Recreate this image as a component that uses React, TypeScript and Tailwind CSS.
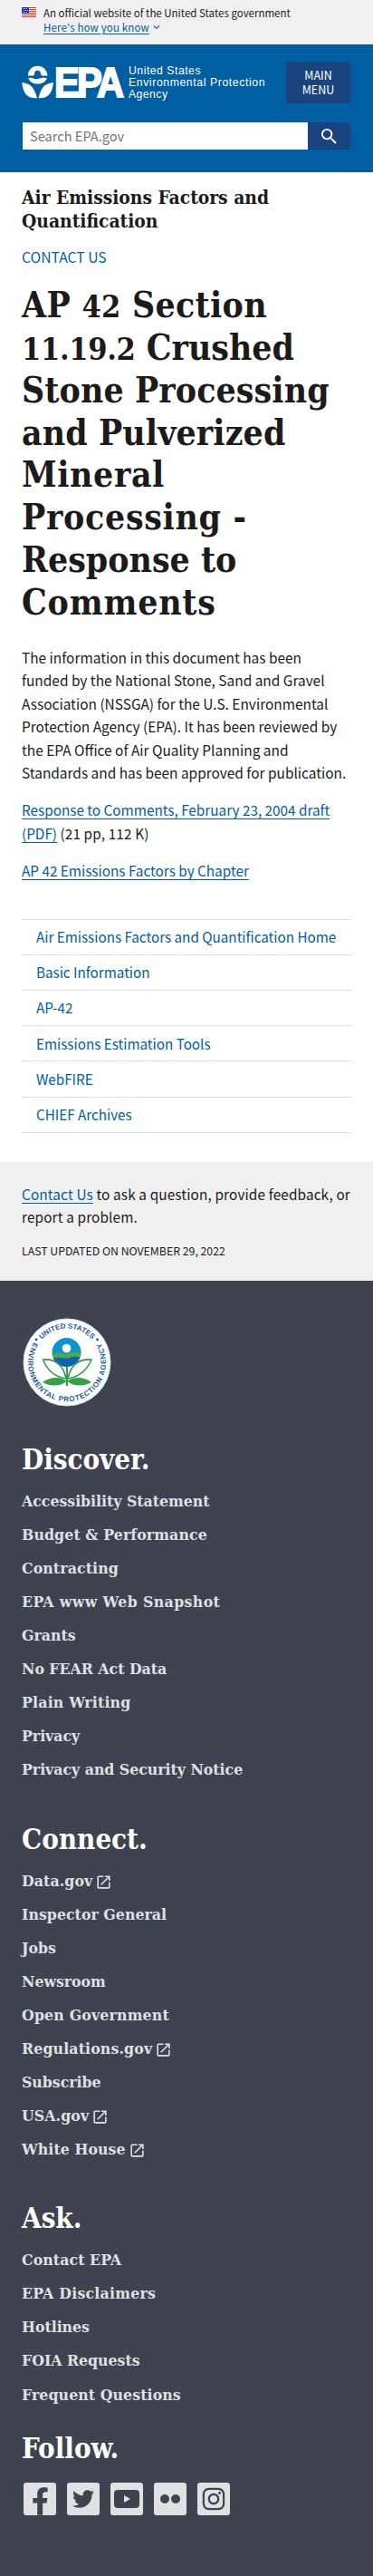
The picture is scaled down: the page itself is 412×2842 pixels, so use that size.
import type { ReactNode } from "react";
import { FaFacebookF, FaInstagram, FaTwitter } from "react-icons/fa";
import { MdExpandMore, MdOpenInNew, MdSearch } from "react-icons/md";

const SERIF = "font-['DejaVu_Serif_Condensed','DejaVu_Serif',serif] font-bold";
const LINK = "text-[#005ea2] underline underline-offset-[3px] decoration-1";

function Flag() {
  return (
    <svg width="16" height="11" viewBox="0 0 16 11" className="block shrink-0">
      <rect width="16" height="11" fill="#fff" />
      {[0, 2, 4, 6, 8, 10].map((y) => (
        <rect key={y} y={y} width="16" height="1" fill="#db3e1f" />
      ))}
      <rect width="8" height="7" fill="#1e33b1" />
      {[1, 3, 5].map((y) =>
        [1, 3, 5].map((x) => <rect key={`${x}-${y}`} x={x + (y === 3 ? 1 : 0)} y={y} width="1" height="1" fill="#fff" opacity=".8" />)
      )}
    </svg>
  );
}

function Logo() {
  return (
    <svg width="270" height="44" viewBox="0 0 270 44" className="block overflow-visible" fill="#fff" role="img">
      <path d="M6.8 13.6C7.2 7 11.600 2.800 17.500 2.800S28 7 28.500 13.600H22A4.700 4.700 0 0 0 13 13.600Z" />
      <circle cx="17.500" cy="11" r="3.300" fill="#005ea2" />
      <path d="M7.200 16.200C12 14.700 13 18 17.500 17C21 16 24 15 28 16.200C26 20.500 22.500 22.600 17.600 22.600S9 20.500 7.200 16.200Z" />
      <path d="M.2 21C8 22 13.500 24.500 17 38.300C6 39 1.500 33 .2 21Z" />
      <path d="M35 21C27 22 21.500 24.500 18.500 38.300C29 39 33.700 33 35 21Z" />
      <text transform="translate(36 36.600) scale(.895 1)" letterSpacing="-3" fontSize="46.500" stroke="#fff" strokeWidth="2" className="font-['Liberation_Sans',Arial,sans-serif] font-bold">
        EPA
      </text>
      <g fontSize="12.200" className="font-['Liberation_Sans',Arial,sans-serif] font-normal">
        <text x="118" y="12.400" textLength="79.500">United States</text>
        <text x="118" y="25" textLength="150.500">Environmental Protection</text>
        <text x="118" y="38" textLength="43">Agency</text>
      </g>
    </svg>
  );
}

function Seal() {
  return (
    <svg width="98" height="98" viewBox="0 0 98 98" className="ml-px block" role="img">
      <defs>
        <path id="seal-top" d="M11.500 49a37.500 37.500 0 0 1 75 0" />
        <path id="seal-bottom" d="M12.400 26.700A43 43 0 1 0 85.600 26.700" />
        <clipPath id="seal-globe">
          <circle cx="48.500" cy="38" r="16" />
        </clipPath>
      </defs>
      <circle cx="49" cy="49" r="48" fill="#fff" stroke="#bfe3fa" strokeWidth="1" />
      <g fill="#1c5c97" fontSize="8" className="font-['Liberation_Sans',Arial,sans-serif] font-bold">
        <text textAnchor="middle">
          <textPath href="#seal-top" startOffset="50%">UNITED STATES</textPath>
        </text>
        <text textAnchor="middle" letterSpacing=".7">
          <textPath href="#seal-bottom" startOffset="50%">ENVIRONMENTAL PROTECTION AGENCY</textPath>
        </text>
      </g>
      <circle cx="15" cy="24" r="1.400" fill="#1c5c97" />
      <circle cx="82.500" cy="24" r="1.400" fill="#1c5c97" />
      <g clipPath="url(#seal-globe)">
        <rect x="32" y="22" width="33" height="19" fill="#0e93d2" />
        <path d="M32 40C39 36 43 41 50 39S59 37 65 39V46H32Z" fill="#4aa948" />
        <path d="M32 44.500C40 42 46 46 52 44S60 43 65 44V56H32Z" fill="#0b62b0" />
      </g>
      <circle cx="48.500" cy="33.500" r="4.800" fill="#fff" />
      <path d="M49 54V75" stroke="#34a047" strokeWidth="2" />
      <path d="M22.500 46C36 45 45 52 48 67C36 65 27 58 22.500 46ZM76 46C62 45 53 52 50 67C62 65 71 58 76 46Z" fill="#fff" stroke="#34a047" strokeWidth="1.600" />
      <path d="M22 71C30 65 42 64 49 70C56 64 68 65 76 71C67 76 56 76 49 69.500C42 76 31 76 22 71Z" fill="#34a047" />
    </svg>
  );
}

const navLinks = ["Air Emissions Factors and Quantification Home", "Basic Information", "AP-42", "Emissions Estimation Tools", "WebFIRE", "CHIEF Archives"];

const headingLines: [ReactNode, string][] = [
  [<>AP <span className="text-[34px]">42</span> Section</>, "tracking-[0.3px]"],
  [<><span className="text-[34px] tracking-[-0.3px]">11.19.2</span> Crushed</>, ""],
  ["Stone Processing", "tracking-[0.1px]"],
  ["and Pulverized", "tracking-[0.1px]"],
  ["Mineral", "tracking-[0.6px]"],
  ["Processing -", "tracking-[0.7px]"],
  ["Response to", ""],
  ["Comments", "tracking-[0.8px]"],
];

type FooterLink = { label: string; external?: boolean; tracking?: string };
const footerGroups: { title: string; links: FooterLink[] }[] = [
  {
    title: "Discover.",
    links: [
      { label: "Accessibility Statement" },
      { label: "Budget & Performance", tracking: "tracking-[0.12px]" },
      { label: "Contracting", tracking: "tracking-[0.12px]" },
      { label: "EPA www Web Snapshot", tracking: "tracking-[0.4px]" },
      { label: "Grants" },
      { label: "No FEAR Act Data" },
      { label: "Plain Writing", tracking: "tracking-[0.2px]" },
      { label: "Privacy" },
      { label: "Privacy and Security Notice" },
    ],
  },
  {
    title: "Connect.",
    links: [
      { label: "Data.gov", external: true, tracking: "tracking-[0.1px]" },
      { label: "Inspector General", tracking: "tracking-[0.05px]" },
      { label: "Jobs" },
      { label: "Newsroom" },
      { label: "Open Government", tracking: "tracking-[0.2px]" },
      { label: "Regulations.gov", external: true, tracking: "tracking-[0.15px]" },
      { label: "Subscribe" },
      { label: "USA.gov", external: true, tracking: "tracking-[0.1px]" },
      { label: "White House", external: true, tracking: "tracking-[0.1px]" },
    ],
  },
  {
    title: "Ask.",
    links: [
      { label: "Contact EPA", tracking: "tracking-[0.1px]" },
      { label: "EPA Disclaimers", tracking: "tracking-[0.25px]" },
      { label: "Hotlines" },
      { label: "FOIA Requests" },
      { label: "Frequent Questions", tracking: "tracking-[0.1px]" },
    ],
  },
];

function FooterTitle({ children }: { children: ReactNode }) {
  return <h2 className={`${SERIF} h-[37px] text-[31px] leading-[37px] text-white`}>{children}</h2>;
}

function SocialTile({ children }: { children: ReactNode }) {
  return <a className="flex h-9 w-9 items-center justify-center overflow-hidden rounded-[3px] bg-[#dfe1e2] text-[#3f434f]">{children}</a>;
}

export default function App() {
  return (
    <div className="flex min-h-[2842px] w-[412px] flex-col overflow-hidden bg-white font-['Noto_Sans_CJK_SC','Noto_Sans',sans-serif] text-[15.3px] leading-[25.44px] text-[#1b1b1b]">
      <div className="flex h-[49px] gap-2 bg-[#f0f0f0] px-6 pt-2">
        <Flag />
        <div className="-mt-0.5 text-[11.5px] leading-4 whitespace-nowrap">
          <p>An official website of the United States government</p>
          <p className="flex items-center text-[#005ea2]">
            <span className="tracking-[0.15px] underline decoration-1 underline-offset-2">Here's how you know</span>
            <MdExpandMore className="ml-px h-3.5 w-3.5" />
          </p>
        </div>
      </div>

      <header className="h-[141px] bg-[#005ea2] pr-[25px] pl-6">
        <div className="flex h-[86px] items-start justify-between pt-[19px]">
          <div className="pt-0.5">
            <Logo />
          </div>
          <button className="-ml-2 flex h-[46px] w-[71px] flex-col items-center justify-center bg-[#1a4480] text-[12.5px] leading-4 text-white">
            <span>MAIN</span>
            <span>MENU</span>
          </button>
        </div>
        <div className="ml-px flex h-[30px]">
          <div className="flex w-[315px] items-center bg-white pl-2 text-[14.6px] text-[#757575]">Search EPA.gov</div>
          <div className="flex w-[47px] items-center justify-center bg-[#1a4480] text-white">
            <MdSearch className="h-[23px] w-[23px]" />
          </div>
        </div>
      </header>

      <main className="px-6 pt-[15px]">
        <div className={`${SERIF} text-[20.8px] leading-[26px] whitespace-nowrap`}>
          Air Emissions Factors and
          <br />
          Quantification
        </div>
        <a className="mt-[15px] block text-[15.7px] leading-6 text-[#005ea2]">CONTACT US</a>
        <h1 className={`${SERIF} mt-[18px] text-[38.8px] leading-[46.85px]`}>
          {headingLines.map(([text, cls], i) => (
            <span key={i} className={`block h-[46.85px] whitespace-nowrap ${cls}`}>
              {text}
            </span>
          ))}
        </h1>
        <p className="mt-6 text-[15.43px] whitespace-nowrap">
          The information in this document has been
          <br />
          funded by the National Stone, Sand and Gravel
          <br />
          Association (NSSGA) for the U.S. Environmental
          <br />
          Protection Agency (EPA). It has been reviewed by
          <br />
          the EPA Office of Air Quality Planning and
          <br />
          Standards and has been approved for publication.
        </p>
        <p className="mt-4 whitespace-nowrap">
          <a className={LINK}>
            Response to Comments, February 23, 2004 draft
            <br />
            (PDF)
          </a>{" "}
          <span className="tracking-[0.15px]">(21 pp, 112 K)</span>
        </p>
        <p className="mt-4">
          <a className={LINK}>AP 42 Emissions Factors by Chapter</a>
        </p>
        <nav className="mt-10 border-b border-[#dfe1e2]">
          {navLinks.map((l) => (
            <a key={l} className="flex h-[39.2px] items-center border-t border-[#dfe1e2] pl-4 text-[15.23px] whitespace-nowrap text-[#005ea2]">
              {l}
            </a>
          ))}
        </nav>
      </main>

      <section className="mt-8 h-[131px] bg-[#f0f0f0] px-6 pt-[23px]">
        <p className="tracking-[0.15px] whitespace-nowrap">
          <a className={LINK}>Contact Us</a> to ask a question, provide feedback, or
          <br />
          report a problem.
        </p>
        <p className="mt-[15px] text-[12.3px] leading-[18px]">LAST UPDATED ON NOVEMBER 29, 2022</p>
      </section>

      <footer className="grow bg-[#3f434f] px-6 pt-[41px]">
        <Seal />
        <div className="mt-10">
          {footerGroups.map((g) => (
            <div key={g.title} className={g.title === "Ask." ? "mb-[22px]" : "mb-[39px]"}>
              <FooterTitle>{g.title}</FooterTitle>
              <ul className="mt-[9px]">
                {g.links.map((l) => (
                  <li key={l.label} className={`${SERIF} flex h-[37.08px] items-center text-[17.5px] leading-[37px] text-[#dfe1e2] ${l.tracking ?? ""}`}>
                    {l.label}
                    {l.external && <MdOpenInNew className="mt-0.5 ml-[3px] h-[19px] w-[19px]" />}
                  </li>
                ))}
              </ul>
            </div>
          ))}
          <FooterTitle>Follow.</FooterTitle>
          <div className="mt-[19px] ml-0.5 flex gap-3">
            <SocialTile>
              <FaFacebookF className="mt-[6px] h-[31px] w-[19px]" />
            </SocialTile>
            <SocialTile>
              <FaTwitter className="h-6 w-6" />
            </SocialTile>
            <SocialTile>
              <span className="flex h-5 w-7 items-center justify-center rounded-[4px] bg-[#3f434f]">
                <svg width="8" height="8" viewBox="0 0 8 8">
                  <path d="M1 0L8 4L1 8Z" fill="#dfe1e2" />
                </svg>
              </span>
            </SocialTile>
            <SocialTile>
              <span className="flex gap-[2px]">
                <span className="h-2.5 w-2.5 rounded-full bg-[#3f434f]" />
                <span className="h-2.5 w-2.5 rounded-full bg-[#3f434f]" />
              </span>
            </SocialTile>
            <SocialTile>
              <FaInstagram className="h-7 w-7" />
            </SocialTile>
          </div>
        </div>
      </footer>
    </div>
  );
}
